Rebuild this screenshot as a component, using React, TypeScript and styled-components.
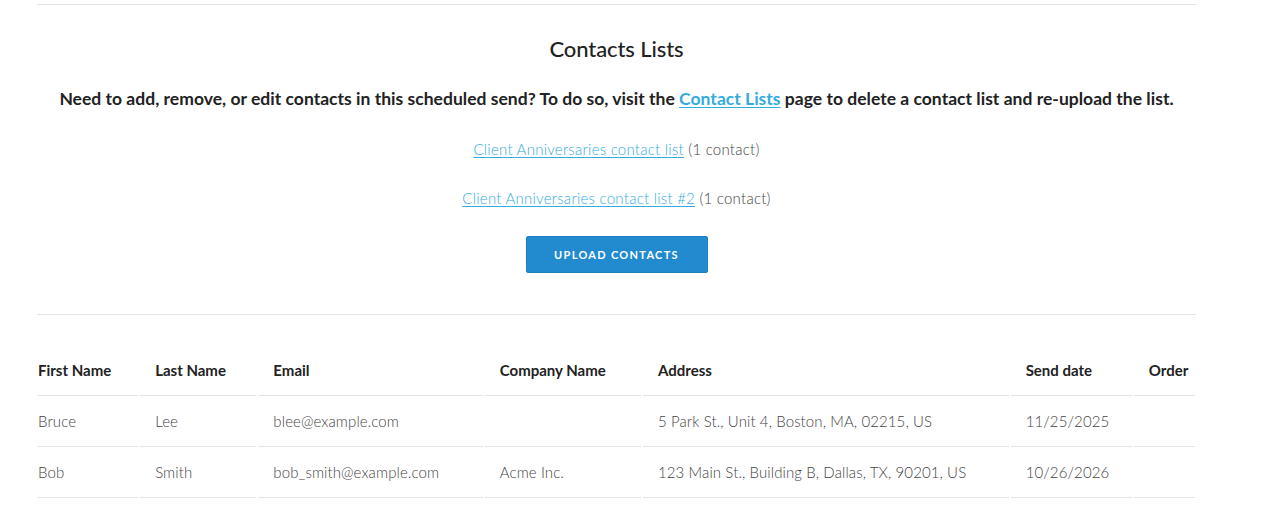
import React from "react";
import styled, { createGlobalStyle } from "styled-components";

const Global = createGlobalStyle`
  html, body { margin: 0; padding: 0; background: #fff; }
  body { font-family: "Lato", "Open Sans", sans-serif; color: #333; }
`;

const Page = styled.div`
  padding: 4px 0 0 37px;
`;

const Container = styled.div`
  width: 1159px;
`;

const Rule = styled.hr`
  border: 0;
  border-top: 1px solid #e3e3e3;
  margin: 0;
`;

const Title = styled.h2`
  margin: 30px 0 0;
  text-align: center;
  font-size: 22px;
  font-weight: 500;
  color: #222;
  line-height: 28px;
  letter-spacing: -0.1px;
`;

const Lead = styled.p`
  margin: 24px 0 0;
  text-align: center;
  font-size: 17.5px;
  font-weight: 700;
  color: #222;
  line-height: 24px;
  letter-spacing: 0.02px;
`;

const Link = styled.a<{ $bold?: boolean }>`
  color: #34ace0;
  text-decoration: underline;
  text-underline-offset: 2px;
  font-weight: ${(p) => (p.$bold ? 700 : 300)};
  cursor: pointer;
`;

const ListLine = styled.p`
  margin: 0;
  text-align: center;
  font-size: 15px;
  font-weight: 300;
  line-height: 20px;
  color: #444;
  letter-spacing: 0.25px;
  & + & { margin-top: 29px; }
`;

const Lists = styled.div`
  margin-top: 28px;
`;

const ButtonRow = styled.div`
  display: flex;
  justify-content: center;
  margin: 28px 0 41px;
`;

const UploadButton = styled.button`
  width: 182px;
  height: 37px;
  background: #228bd0;
  border: 1px solid #1f7fbf;
  border-radius: 2px;
  color: #fff;
  font-family: "Lato", sans-serif;
  font-size: 11px;
  font-weight: 700;
  letter-spacing: 1.3px;
  text-transform: uppercase;
  cursor: pointer;
`;

const Table = styled.table`
  border-collapse: separate;
  border-spacing: 2px 0;
  width: 1161px;
  margin: 30px -1px 0;
  table-layout: fixed;
`;

const Th = styled.th<{ $w: number }>`
  width: ${(p) => p.$w}px;
  text-align: left;
  font-size: 15px;
  font-weight: 700;
  color: #222;
  height: 51px;
  padding: 0 0 0 15px;
  box-sizing: border-box;
  border-bottom: 1px solid #e3e3e3;
  vertical-align: middle;
  &:first-child { padding-left: 0; }
`;

const Td = styled.td`
  font-size: 15px;
  font-weight: 300;
  color: #444;
  height: 51px;
  box-sizing: border-box;
  padding: 0 0 0 15px;
  border-bottom: 1px solid #e3e3e3;
  white-space: nowrap;
  letter-spacing: 0.1px;
  &:first-child { padding-left: 0; }
`;

const columns = [
  { label: "First Name", w: 100 },
  { label: "Last Name", w: 116 },
  { label: "Email", w: 224 },
  { label: "Company Name", w: 156 },
  { label: "Address", w: 365 },
  { label: "Send date", w: 121 },
  { label: "Order", w: 61 },
];

const rows = [
  ["Bruce", "Lee", "blee@example.com", "", "5 Park St., Unit 4, Boston, MA, 02215, US", "11/25/2025", ""],
  ["Bob", "Smith", "bob_smith@example.com", "Acme Inc.", "123 Main St., Building B, Dallas, TX, 90201, US", "10/26/2026", ""],
];

export default function App() {
  return (
    <>
      <Global />
      <Page>
        <Container>
          <Rule />
          <Title>Contacts Lists</Title>
          <Lead>
            Need to add, remove, or edit contacts in this scheduled send? To do so, visit the{" "}
            <Link $bold>Contact Lists</Link> page to delete a contact list and re-upload the list.
          </Lead>
          <Lists>
            <ListLine>
              <Link>Client Anniversaries contact list</Link> (1 contact)
            </ListLine>
            <ListLine>
              <Link>Client Anniversaries contact list #2</Link> (1 contact)
            </ListLine>
          </Lists>
          <ButtonRow>
            <UploadButton>Upload Contacts</UploadButton>
          </ButtonRow>
          <Rule />
          <Table>
            <thead>
              <tr>
                {columns.map((c) => (
                  <Th key={c.label} $w={c.w}>{c.label}</Th>
                ))}
              </tr>
            </thead>
            <tbody>
              {rows.map((r, i) => (
                <tr key={i}>
                  {r.map((cell, j) => (
                    <Td key={j}>{cell}</Td>
                  ))}
                </tr>
              ))}
            </tbody>
          </Table>
        </Container>
      </Page>
    </>
  );
}
